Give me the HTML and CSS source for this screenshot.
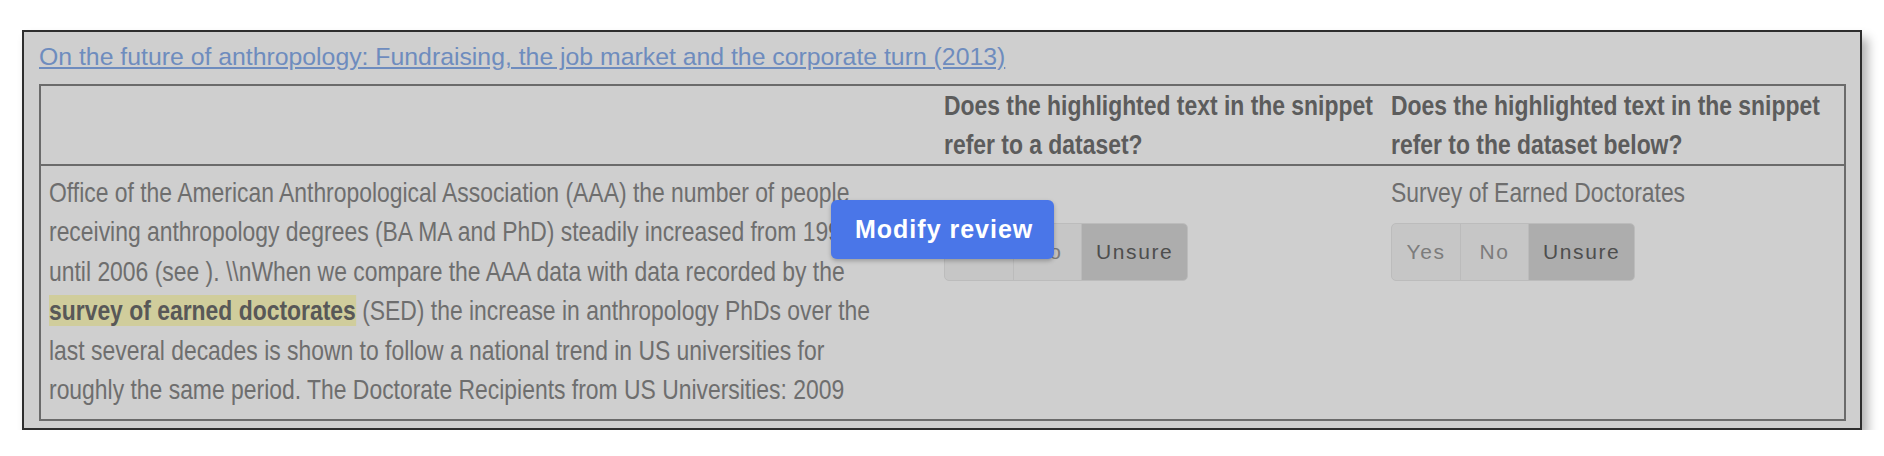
FILE: index.html
```html
<!DOCTYPE html>
<html lang="en">
<head>
    <meta charset="UTF-8">
    <meta name="viewport" content="width=device-width, initial-scale=1.0">
    <title>Snippet Review</title>
    <link rel="stylesheet" href="styles.css">
</head>
<body>

<div class="frame">
    <a class="paper-title" href="#">On the future of anthropology: Fundraising, the job market and the corporate turn (2013)</a>

    <table class="review-table">
        <colgroup>
            <col class="col-snippet">
            <col class="col-question">
            <col class="col-question2">
        </colgroup>
        <thead>
            <tr>
                <th></th>
                <th><div class="narrow">Does the highlighted text in the snippet refer to a dataset?</div></th>
                <th><div class="narrow">Does the highlighted text in the snippet refer to the dataset below?</div></th>
            </tr>
        </thead>
        <tbody>
            <tr>
                <td class="snippet">
                    <div class="narrow">
                        Office of the American Anthropological Association (AAA) the number of people
                        receiving anthropology degrees (BA MA and PhD) steadily increased from 1994
                        until 2006 (see ). \\nWhen we compare the AAA data with data recorded by the
                        <mark class="highlight">survey of earned doctorates</mark> (SED) the increase in anthropology PhDs over the
                        last several decades is shown to follow a national trend in US universities for
                        roughly the same period. The Doctorate Recipients from US Universities: 2009
                    </div>
                </td>
                <td>
                    <div class="dataset-name narrow"></div>
                    <div class="choice-group">
                        <button class="choice">Yes</button>
                        <button class="choice">No</button>
                        <button class="choice selected">Unsure</button>
                    </div>
                </td>
                <td>
                    <div class="dataset-name narrow">Survey of Earned Doctorates</div>
                    <div class="choice-group">
                        <button class="choice">Yes</button>
                        <button class="choice">No</button>
                        <button class="choice selected">Unsure</button>
                    </div>
                </td>
            </tr>
        </tbody>
    </table>

    <button class="modify-button">Modify review</button>
</div>

</body>
</html>
```

FILE: styles.css
```css
* {
    margin: 0;
    padding: 0;
    box-sizing: border-box;
    font-family: "Liberation Sans", Arial, sans-serif;
}

body {
    background-color: #ffffff;
    padding: 30px 0 0 22px;
}

.frame {
    position: relative;
    width: 1840px;
    background-color: #cfcfcf;
    border: 2px solid #2e2e2e;
    padding: 10px 14px 7px 15px;
    box-shadow: 6px 8px 10px rgba(0, 0, 0, 0.3);
}

.paper-title {
    display: block;
    font-size: 24.8px;
    line-height: 30px;
    color: #6e8cbe;
    text-decoration: underline;
    margin-bottom: 12px;
}

.review-table {
    width: 1807px;
    border-collapse: collapse;
    table-layout: fixed;
    border: 2px solid #6b6b6b;
}

.review-table th,
.review-table td {
    font-size: 27.6px;
    text-align: left;
    vertical-align: top;
}

/* the table text is a condensed face; no narrow font is installed so squeeze it */
.narrow {
    width: calc(100% / 0.83);
    transform: scaleX(0.83);
    transform-origin: 0 0;
}

.col-snippet {
    width: 896px;
}

.col-question {
    width: 447px;
}

.review-table th {
    color: #5c5c5c;
    font-weight: bold;
    line-height: 39px;
    padding: 0 0 0 8px;
    border-bottom: 2px solid #6b6b6b;
}

.review-table td {
    color: #6e6e6e;
    line-height: 39.4px;
    padding: 7px 8px 10px 8px;
}

.review-table td.snippet {
    padding-right: 50px;
}

.highlight {
    background-color: #d0cd9c;
    color: #585858;
    font-weight: bold;
}

.dataset-name {
    height: 39.4px;
}

.choice-group {
    display: inline-flex;
    margin-top: 11px;
    background-color: #c6c6c6;
    border: 1px solid #bcbcbc;
    border-radius: 5px;
    overflow: hidden;
}

.choice {
    min-width: 68px;
    padding: 16px 14px;
    font-size: 21px;
    line-height: 24px;
    letter-spacing: 1.6px;
    color: #7c7c7c;
    background: none;
    border: none;
    border-left: 1px solid #bbbbbb;
    cursor: pointer;
}

.choice:first-child {
    border-left: none;
}

.choice.selected {
    background-color: #adadad;
    color: #4e4e4e;
}

.modify-button {
    position: absolute;
    left: 807px;
    top: 168px;
    width: 223px;
    height: 59px;
    padding-left: 24px;
    text-align: left;
    background-color: #4a76e8;
    color: white;
    font-size: 25px;
    font-weight: bold;
    letter-spacing: 1px;
    border: none;
    border-radius: 6px;
    box-shadow: 0 2px 4px rgba(0, 0, 0, 0.25);
    cursor: pointer;
}
```
